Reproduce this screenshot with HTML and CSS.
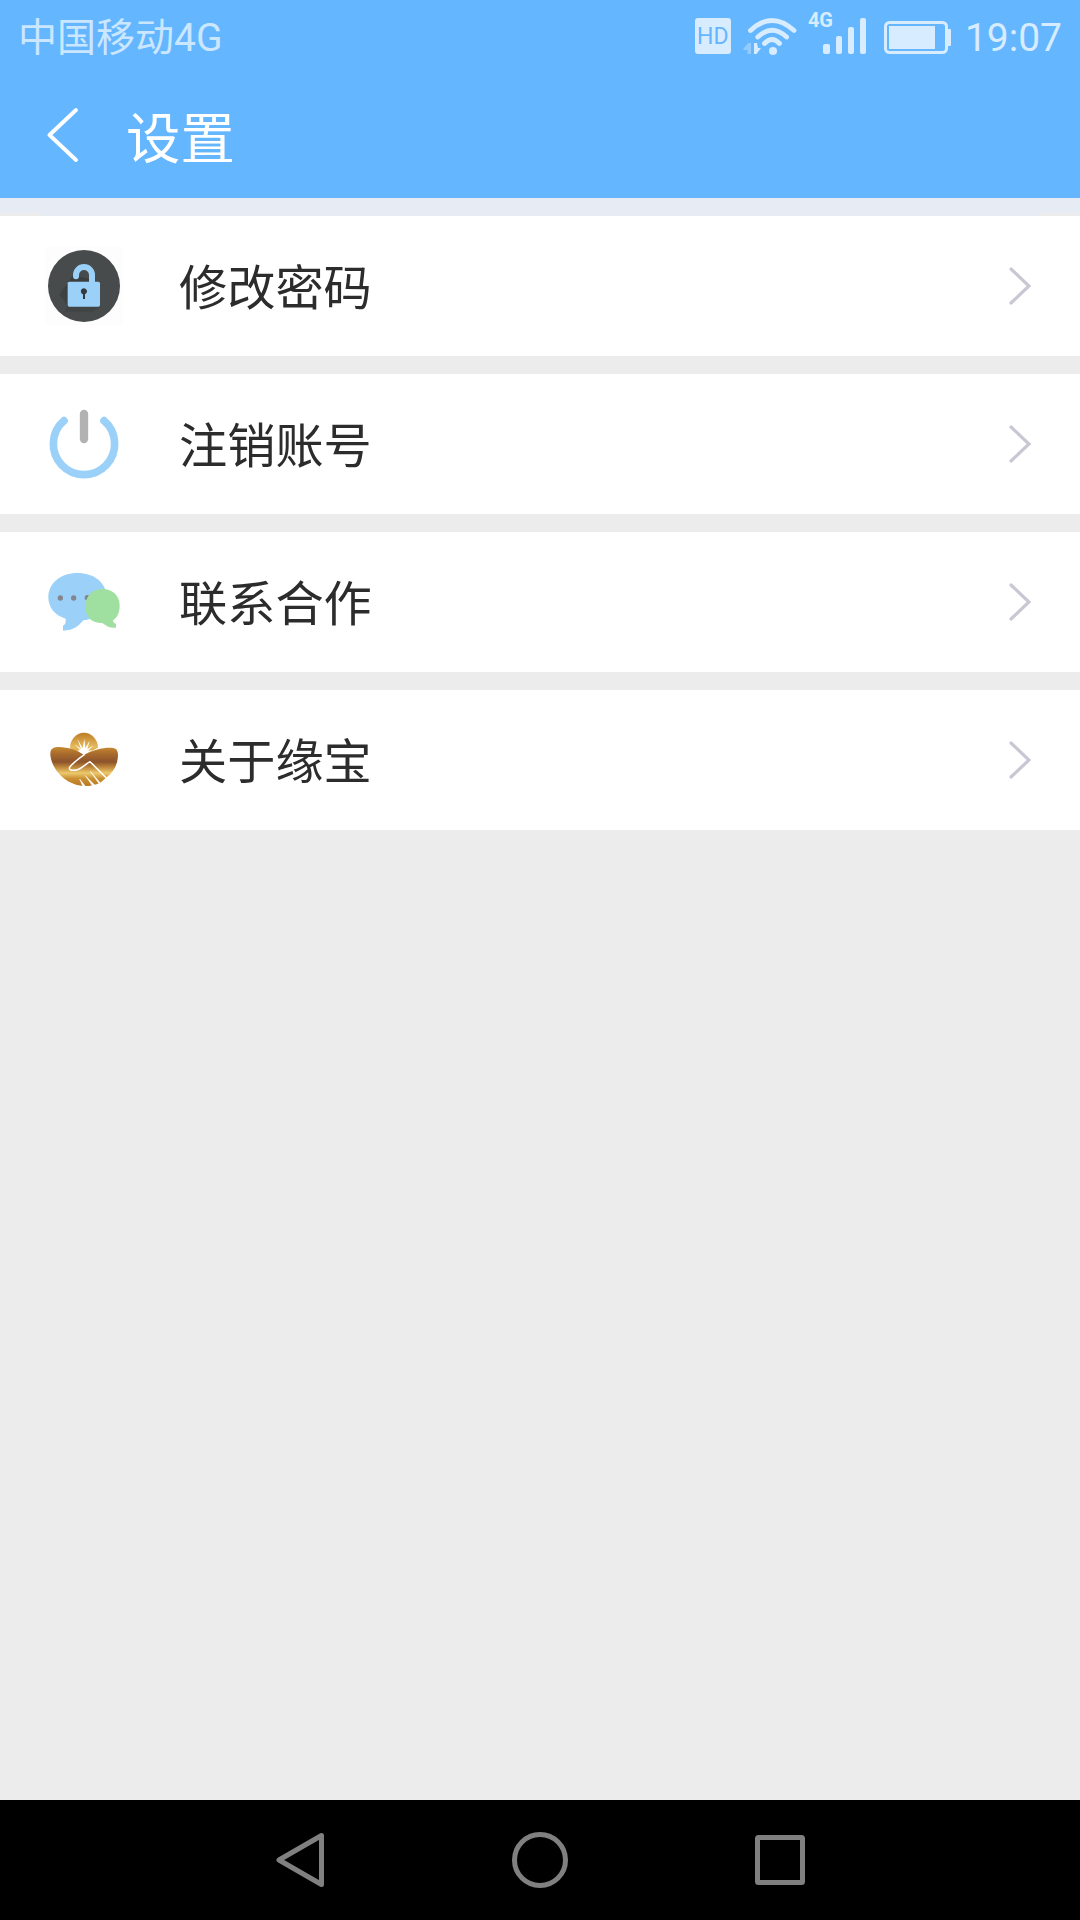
FILE: index.html
```html
<!DOCTYPE html>
<html lang="zh-CN">
<head>
<meta charset="utf-8">
<title>设置</title>
<link rel="stylesheet" href="styles.css">
</head>
<body>
<div class="screen">
  <header class="header">
    <div class="status">
      <span class="carrier">中国移动4G</span>
      <div class="indicators">
        <span class="hd">HD</span>
        <svg class="wifi" width="56" height="40" viewBox="0 0 56 40" fill="none" stroke="currentColor" stroke-width="4.800" stroke-linecap="round">
          <path d="M8.500 14.500Q30 -5.500 52 14.500M15.800 21Q30 7.500 44.600 21M22.500 27.500Q30 19.500 37.500 27.500"/>
          <circle cx="31" cy="35" r="4" fill="currentColor" stroke="none"/>
          <path d="M1.500 32.500L6 27H9V38H5.500V34H1.500Z" fill="currentColor" stroke="none" opacity=".4"/>
          <path d="M12 27H15L16 32H19L14.500 38H12Z" fill="currentColor" stroke="none"/>
        </svg>
        <div class="signal">
          <span class="net">4G</span>
          <svg width="44" height="36" viewBox="0 0 44 36" fill="currentColor">
            <rect x="0" y="26" width="7" height="10" rx="2"/>
            <rect x="13" y="18" width="6" height="18" rx="2"/>
            <rect x="25" y="9" width="6" height="27" rx="2"/>
            <rect x="37" y="0" width="6" height="36" rx="2"/>
          </svg>
        </div>
        <svg class="battery" width="67" height="33" viewBox="0 0 67 33" fill="currentColor">
          <rect x="1.500" y="1.500" width="61" height="30" rx="4" fill="none" stroke="currentColor" stroke-width="3"/>
          <rect x="5" y="5" width="46" height="23"/>
          <rect x="63" y="8" width="4" height="17" rx="1"/>
        </svg>
        <span class="clock">19:07</span>
      </div>
    </div>
    <div class="titlebar">
      <svg width="32" height="56" viewBox="0 0 32 56" fill="none" stroke="#fff" stroke-width="3.800" stroke-linecap="round" stroke-linejoin="round"><path d="M29 3L2.500 28L29 53"/></svg>
      <h1 class="title">设置</h1>
    </div>
  </header>

  <main class="list">
    <div class="row">
      <svg class="icon" viewBox="45 51 234 234">
        <defs>
          <linearGradient id="shade" x1="0" y1="0" x2="0" y2="1"><stop offset="0" stop-color="#2f3232"/><stop offset="1" stop-color="#3b3f3f"/></linearGradient>
        </defs>
        <rect x="47" y="52" width="231" height="232" fill="#fdfdfd"/>
        <circle cx="162" cy="168" r="108" fill="#474b4b"/>
        <path d="M129 136L88 194L112 228L103 245H190L210 229L195 150Z" fill="url(#shade)" opacity=".55"/>
        <path d="M138 139V135A24 24 0 0 1 186 135V160" fill="none" stroke="#9bd1f9" stroke-width="18" stroke-linecap="round"/>
        <rect x="113" y="155" width="97" height="75" rx="5" fill="#9bd1f9"/>
        <path d="M153 186A9 9 0 1 1 167 191L165 193V207H159V193Q153 191 153 186Z" fill="#363a3c"/>
      </svg>
      <span class="label">修改密码</span>
      <svg class="chevron" width="22" height="38" viewBox="0 0 22 38"><path d="M2 2L20 19L2 36"/></svg>
    </div>
    <div class="row">
      <svg class="icon" viewBox="45 45 234 234" fill="none" stroke-linecap="round">
        <path d="M102 92A92 92 0 1 0 222 92" stroke="#9bd1f9" stroke-width="23"/>
        <path d="M162 72V147" stroke="#b2b2b2" stroke-width="25"/>
      </svg>
      <span class="label">注销账号</span>
      <svg class="chevron" width="22" height="38" viewBox="0 0 22 38"><path d="M2 2L20 19L2 36"/></svg>
    </div>
    <div class="row">
      <svg class="icon" viewBox="45 39 234 234">
        <path d="M142 69C190 69 229 96 229 140C229 178 201 207 160 211C145 228 132 242 99 242V227Q109 222 107 206C72 196 55 170 55 142C55 100 92 69 142 69Z" fill="#9bd1f9"/>
        <g fill="#85858f"><circle cx="91" cy="144" r="8"/><circle cx="131" cy="144" r="8"/><circle cx="172" cy="143" r="8"/></g>
        <path d="M218 117C248 117 269 137 269 167C269 188 261 203 249 211Q249 219 258 222V233C240 235 229 228 217 219C188 220 166 203 166 170C166 138 187 117 218 117Z" fill="#9fdf9f"/>
      </svg>
      <span class="label">联系合作</span>
      <svg class="chevron" width="22" height="38" viewBox="0 0 22 38"><path d="M2 2L20 19L2 36"/></svg>
    </div>
    <div class="row">
      <svg class="icon" viewBox="45 33 234 234">
        <defs>
          <linearGradient id="gold" gradientUnits="userSpaceOnUse" x1="0" y1="110" x2="0" y2="230">
            <stop offset="0" stop-color="#c88a31"/><stop offset=".18" stop-color="#a96b2c"/><stop offset=".38" stop-color="#8d532b"/><stop offset=".52" stop-color="#c18a3c"/><stop offset=".66" stop-color="#edc96d"/><stop offset=".8" stop-color="#c88f32"/><stop offset="1" stop-color="#b9761f"/>
          </linearGradient>
          <linearGradient id="sun" x1="0" y1="0" x2="0" y2="1"><stop offset="0" stop-color="#bd7c26"/><stop offset=".65" stop-color="#e7bc5e"/><stop offset="1" stop-color="#cf983c"/></linearGradient>
        </defs>
        <path d="M120 115A42 46 0 0 1 204 113L162 135Z" fill="url(#sun)"/>
        <path d="M162 135L140 123L150 120L134 102L153 117L142 87L158 115L163 86L166 115L179 92L172 118L190 106L175 122L188 121Z" fill="#fff"/>
        <path d="M61 134C60 116 70 111 87 111C115 112 140 119 162 135C186 120 218 112 245 113C259 114 264 121 264 136C263 166 249 187 230 202L211 218Q190 228 162 228C112 226 66 184 61 134Z" fill="url(#gold)"/>
        <path d="M164 133C150 143 132 156 120 170C113 180 126 183 143 179C158 174 166 162 180 155L229 204" fill="none" stroke="#fff" stroke-width="4.500" stroke-linejoin="round"/>
        <path d="M181 184L211 219L207 221ZM166 197L194 225L188 228ZM149 207L165 227L159 230Z" fill="#fff" stroke="#fff" stroke-width="1.500"/>
      </svg>
      <span class="label">关于缘宝</span>
      <svg class="chevron" width="22" height="38" viewBox="0 0 22 38"><path d="M2 2L20 19L2 36"/></svg>
    </div>
  </main>

  <nav class="navbar">
    <svg width="54" height="60" viewBox="0 0 54 60"><path d="M48.500 5.500V54.500L6 30Z"/></svg>
    <svg width="60" height="60" viewBox="0 0 60 60"><circle cx="30" cy="30" r="25.500"/></svg>
    <svg width="56" height="60" viewBox="0 0 56 60"><rect x="5.500" y="7.500" width="45" height="45" rx="1"/></svg>
  </nav>
</div>
</body>
</html>
```
FILE: styles.css
```css
* {
  box-sizing: border-box;
}

body {
  margin: 0;
  font-family: Roboto, "Noto Sans CJK SC", sans-serif;
}

svg {
  display: block;
  flex: none;
}

.screen {
  display: flex;
  flex-direction: column;
  width: 1080px;
  height: 1920px;
  background: #ececec;
}

.header {
  height: 198px;
  background: #64b6ff;
}

.status {
  display: flex;
  justify-content: space-between;
  height: 72px;
  padding: 0 18px 0 18px;
  color: #d8ecff;
  font-size: 39px;
  line-height: 76px;
}

.carrier {
  color: #cbe6ff;
}

.indicators {
  display: flex;
  align-items: flex-start;
}

.hd {
  width: 36px;
  height: 36px;
  margin-top: 18px;
  border-radius: 3px;
  background: #d8ecff;
  color: #64b6ff;
  font-size: 23px;
  line-height: 37px;
  text-align: center;
}

.wifi {
  margin: 16px 0 0 11px;
}

.signal {
  display: flex;
  margin-left: 10px;
}

.net {
  width: 15px;
  height: 24px;
  margin-top: 8px;
  font-size: 20px;
  font-weight: 700;
  line-height: 24px;
  white-space: nowrap;
}

.signal svg {
  margin-top: 18px;
}

.battery {
  margin: 21px 0 0 17px;
}

.clock {
  margin-left: 14px;
}

.titlebar {
  display: flex;
  align-items: center;
  height: 126px;
  padding: 0 0 0 47px;
}

.title {
  margin: 0 0 0 47px;
  padding-top: 10px;
  color: #fff;
  font-size: 54.4px;
  font-weight: 400;
  line-height: 80px;
}

.list {
  display: flex;
  flex: 1;
  flex-direction: column;
  gap: 18px;
  padding-top: 18px;
  background: linear-gradient(90deg, #ececec 42px, #e7ebf4 42px, #e7ebf4 1038px, #ececec 1038px) 0 15px / 100% 3px no-repeat,
    linear-gradient(#e7ebf4, #e7ebf4) 0 0 / 100% 15px no-repeat;
}

.row {
  display: flex;
  align-items: center;
  height: 140px;
  padding: 0 49px 0 45px;
  background: #fff;
}

.icon {
  width: 78px;
  height: 78px;
}

.label {
  flex: 1;
  margin-left: 56px;
  padding-top: 6px;
  color: #2c2c2c;
  font-size: 48.2px;
  line-height: 72px;
}

.chevron {
  fill: none;
  stroke: #c8c7d4;
  stroke-width: 3.2;
  stroke-linecap: round;
}

.navbar {
  display: flex;
  align-items: center;
  justify-content: space-between;
  height: 120px;
  padding: 0 272px 0 273px;
  background: #000;
}

.navbar svg {
  fill: none;
  stroke: #808080;
  stroke-width: 5;
  stroke-linejoin: round;
}
```
